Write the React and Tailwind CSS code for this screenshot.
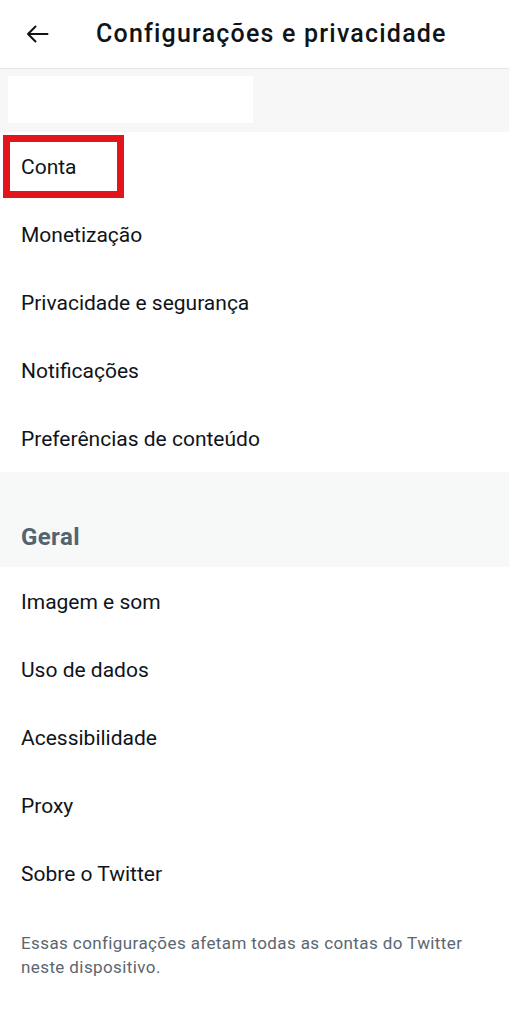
import React from 'react';

const primeiros = ['Conta', 'Monetização', 'Privacidade e segurança', 'Notificações', 'Preferências de conteúdo'];
const gerais = ['Imagem e som', 'Uso de dados', 'Acessibilidade', 'Proxy', 'Sobre o Twitter'];

function Item({ label, marcado }) {
  return (
    <div className="relative flex h-[68px] items-center px-[21px] pt-[4px] text-[21px] text-[#0f1419]">
      {marcado && (
        <div className="absolute left-[3px] top-[3px] h-[63px] w-[121px] border-[7px] border-[#e2141c]" />
      )}
      <span className="relative">{label}</span>
    </div>
  );
}

export default function App() {
  return (
    <div className="min-h-[1024px] w-[509px] bg-white" style={{ fontFamily: 'Roboto, "Noto Sans", sans-serif' }}>
      {/* Header */}
      <div className="flex h-[69px] items-center border-b border-[#e6e6e6]">
        <div className="flex w-[96px] pl-[26px]">
          <svg width="23" height="18" viewBox="0 0 23 18" fill="none" stroke="#0f1419" strokeWidth="2" strokeLinecap="round" strokeLinejoin="round">
            <path d="M21.5 9H2M9.5 1.5L2 9l7.5 7.5" />
          </svg>
        </div>
        <h1 className="text-[25px] font-medium tracking-[1.2px] text-[#0f1419]">Configurações e privacidade</h1>
      </div>

      {/* Conta (oculta) */}
      <div className="h-[63px] bg-[#f7f7f7] py-[7px] pl-[8px]">
        <div className="h-[47px] w-[245px] bg-white" />
      </div>

      {primeiros.map((l, i) => (
        <Item key={l} label={l} marcado={i === 0} />
      ))}

      <div className="flex h-[95px] items-center bg-[#f7f8f8] px-[21px] pt-[34px]">
        <span className="text-[24px] font-bold tracking-[0.4px] text-[#536471]">Geral</span>
      </div>

      {gerais.map((l) => (
        <Item key={l} label={l} />
      ))}

      <p className="px-[21px] pt-[24px] text-[17px] leading-[24px] tracking-[0.4px] text-[#5b6670]">
        Essas configurações afetam todas as contas do Twitter neste dispositivo.
      </p>
    </div>
  );
}
